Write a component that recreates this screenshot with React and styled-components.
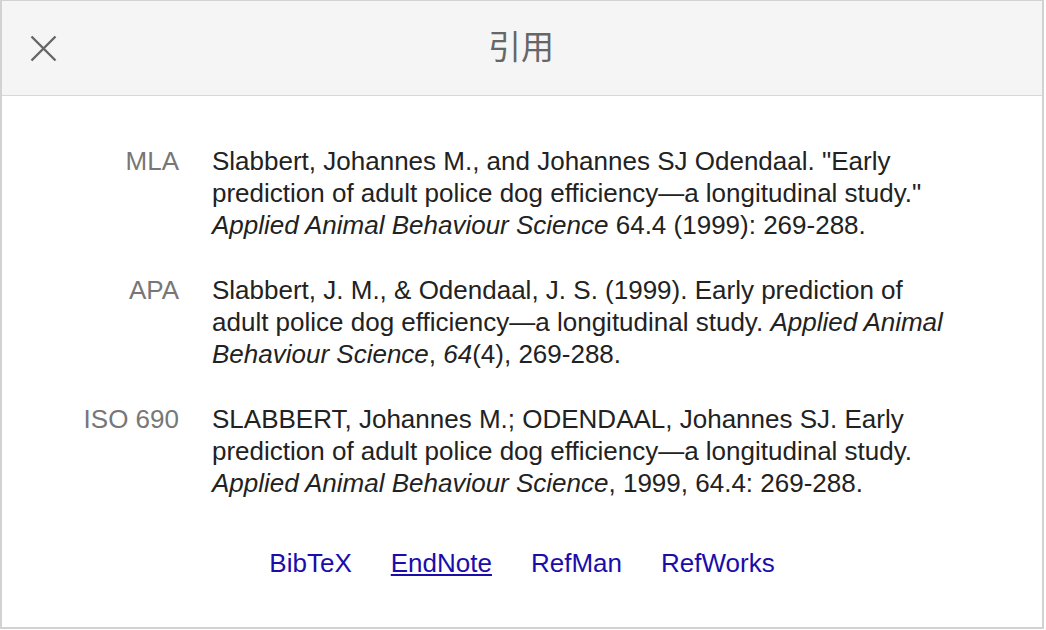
import styled, { createGlobalStyle } from 'styled-components'

const GlobalStyle = createGlobalStyle`
    html, body {
        margin: 0;
        padding: 0;
        background: #fff;
    }
    body {
        font-family: "Liberation Sans", Arial, "Noto Sans CJK SC", sans-serif;
    }
`

const citations = [
    {
        label: 'MLA',
        text: (
            <>
                Slabbert, Johannes M., and Johannes SJ Odendaal. "Early prediction of adult police dog efficiency—a longitudinal study." <i>Applied Animal Behaviour Science</i> 64.4 (1999): 269-288.
            </>
        ),
    },
    {
        label: 'APA',
        text: (
            <>
                Slabbert, J. M., &amp; Odendaal, J. S. (1999). Early prediction of adult police dog efficiency—a longitudinal study. <i>Applied Animal Behaviour Science</i>, <i>64</i>(4), 269-288.
            </>
        ),
    },
    {
        label: 'ISO 690',
        text: (
            <>
                SLABBERT, Johannes M.; ODENDAAL, Johannes SJ. Early prediction of adult police dog efficiency—a longitudinal study. <i>Applied Animal Behaviour Science</i>, 1999, 64.4: 269-288.
            </>
        ),
    },
]

const links = ['BibTeX', 'EndNote', 'RefMan', 'RefWorks']

export default function App() {
    return (
        <>
            <GlobalStyle />
            <Dialog>
                <Header>
                    <CloseButton aria-label="close">
                        <svg width="27" height="27" viewBox="0 0 27 27">
                            <path d="M1.5 1.5 L25.5 25.5 M25.5 1.5 L1.5 25.5" stroke="#666" strokeWidth="2.4" fill="none" />
                        </svg>
                    </CloseButton>
                    <Title>引用</Title>
                </Header>
                <Body>
                    <CiteTable>
                        {citations.map((c) => (
                            <CiteRow key={c.label}>
                                <Label>{c.label}</Label>
                                <CiteText>{c.text}</CiteText>
                            </CiteRow>
                        ))}
                    </CiteTable>
                    <Links>
                        {links.map((l) => (
                            <ExportLink key={l} href="#" $active={l === 'EndNote'}>{l}</ExportLink>
                        ))}
                    </Links>
                </Body>
            </Dialog>
        </>
    )
}

const Dialog = styled.div`
    width: 1044px;
    height: 629px;
    box-sizing: border-box;
    border-style: solid;
    border-color: #d2d2d2;
    border-width: 1px 2px 2px 2px;
    background: #fff;
    display: flex;
    flex-direction: column;
`

const Header = styled.div`
    position: relative;
    height: 94px;
    flex-shrink: 0;
    background: #f5f5f5;
    border-bottom: 1px solid #d8d8d8;
    display: flex;
    align-items: center;
    justify-content: center;
`

const CloseButton = styled.button`
    position: absolute;
    left: 28px;
    top: 34px;
    padding: 0;
    border: none;
    background: none;
    width: 27px;
    height: 27px;
    display: flex;
`

const Title = styled.div`
    font-size: 33px;
    color: #666;
    font-family: "Noto Sans CJK SC", sans-serif;
    line-height: 1;
    margin-top: -5px;
    margin-left: -2px;
`

const Body = styled.div`
    padding: 49px 0 0 0;
    display: flex;
    flex-direction: column;
`

const CiteTable = styled.div`
    display: flex;
    flex-direction: column;
    gap: 33px;
`

const CiteRow = styled.div`
    display: grid;
    grid-template-columns: 177px 745px;
    column-gap: 33px;
    font-size: 26px;
    line-height: 32px;
`

const Label = styled.div`
    text-align: right;
    color: #777;
`

const CiteText = styled.div`
    color: #222;
`

const Links = styled.div`
    display: flex;
    justify-content: center;
    gap: 39px;
    margin-top: 48px;
    font-size: 26px;
    line-height: 32px;
`

const ExportLink = styled.a`
    color: #1a0dab;
    text-decoration: ${({ $active }) => ($active ? 'underline' : 'none')};
`
